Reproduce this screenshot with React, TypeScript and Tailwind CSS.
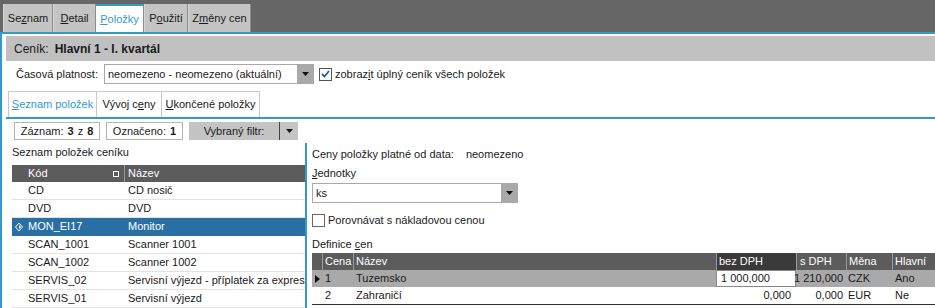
import React from "react";

const U = ({ children }: { children: React.ReactNode }) => (
  <span className="underline underline-offset-[1px]">{children}</span>
);

const Caret = () => (
  <svg width="7" height="4" viewBox="0 0 7 4">
    <path d="M0 0 L7 0 L3.5 4 Z" fill="#111" />
  </svg>
);

const topTabs = [
  { w: "w-[50px]", label: <>Se<U>z</U>nam</> },
  { w: "w-[43px]", label: <><U>D</U>etail</> },
  { w: "w-[48px]", label: <><U>P</U>oložky</>, active: true },
  { w: "w-[44px]", label: <>P<U>o</U>užití</> },
  { w: "w-[63px]", label: <>Z<U>m</U>ěny cen</> },
];

const items = [
  ["CD", "CD nosič"],
  ["DVD", "DVD"],
  ["MON_EI17", "Monitor"],
  ["SCAN_1001", "Scanner 1001"],
  ["SCAN_1002", "Scanner 1002"],
  ["SERVIS_02", "Servisní výjezd - příplatek za expres"],
  ["SERVIS_01", "Servisní výjezd"],
];

export default function App() {
  return (
    <div className="h-[308px] w-[935px] overflow-hidden bg-white font-['Liberation_Sans',Arial,sans-serif] text-[11px] leading-none text-[#1a1a1a]">
      {/* top tabs */}
      <div className="flex h-[32px] items-end bg-[#666666] pl-[3px]">
        {topTabs.map((t, i) => (
          <div
            key={i}
            className={`flex h-[28px] items-center justify-center border-r border-[#8c8c8c] ${t.w} ${
              t.active
                ? "border-t-2 border-t-[#3399cc] bg-white text-[#3399cc]"
                : "border-l border-l-[#d6d6d6] bg-[#c4c4c4] text-[#1a1a1a]"
            }`}
          >
            <span>{t.label}</span>
          </div>
        ))}
      </div>
      <div className="h-[2px] bg-[#3399cc]" />

      <div className="h-[274px] border-l-2 border-[#3399cc] pl-[4px] pt-[2px]">
        {/* header band */}
        <div className="flex h-[25px] items-center border-t border-[#d2bcbc] bg-[#c0c0c0] pl-[8px] text-[12px]">
          <span>Ceník:</span>
          <span className="ml-[6px] font-bold">Hlavní 1 - I. kvartál</span>
        </div>

        {/* platnost */}
        <div className="mt-[3px] flex h-[20px] items-center pl-[10px]">
          <span className="w-[88px]">Časová platnost:</span>
          <div className="flex h-[20px] w-[210px] items-stretch border border-[#a8a8a8]">
            <span className="flex flex-1 items-center pl-[3px]">neomezeno - neomezeno (aktuální)</span>
            <span className="flex w-[16px] items-center justify-center bg-[#a9a9a9]">
              <Caret />
            </span>
          </div>
          <span className="ml-[5px] flex h-[13px] w-[13px] items-center justify-center border border-[#555] bg-white">
            <svg width="9" height="8" viewBox="0 0 9 8">
              <path d="M1 4 L3.5 6.5 L8 1" stroke="#1f5fa8" strokeWidth="1.8" fill="none" />
            </svg>
          </span>
          <span className="ml-[3px]">
            zobraz<U>i</U>t úplný ceník všech položek
          </span>
        </div>

        {/* sub tabs */}
        <div className="ml-[2px] mt-[7px] flex h-[26px] items-stretch">
          <div className="flex w-[89px] items-center justify-center border border-b-0 border-[#c8c8c8] text-[#3399cc]">
            <span>
              <U>S</U>eznam položek
            </span>
          </div>
          <div className="flex w-[65px] items-center justify-center border-r border-t border-[#c8c8c8]">
            <span>
              Vývoj c<U>e</U>ny
            </span>
          </div>
          <div className="flex w-[98px] items-center justify-center border-r border-t border-[#c8c8c8]">
            <span>
              <U>U</U>končené položky
            </span>
          </div>
        </div>
        <div className="h-[2px] bg-[#3399cc]" />

        {/* filter bar */}
        <div className="mt-[3px] flex h-[18px] items-stretch pl-[8px]">
          <div className="flex w-[86px] items-center justify-center border border-[#b4b4b4]">
            <span>Záznam:</span>
            <b className="ml-[4px]">3</b>
            <span className="mx-[4px]">z</span>
            <b>8</b>
          </div>
          <div className="ml-[6px] flex w-[77px] items-center justify-center border border-[#b4b4b4]">
            <span>Označeno:</span>
            <b className="ml-[4px]">1</b>
          </div>
          <div className="ml-[6px] flex w-[90px] items-center justify-center bg-[#c4c4c4]">Vybraný filtr:</div>
          <div className="w-px bg-[#444]" />
          <div className="flex w-[18px] items-center justify-center bg-[#c4c4c4]">
            <Caret />
          </div>
        </div>

        {/* panels */}
        <div className="flex">
          <div className="w-[299px] pl-[6px]">
            <div className="flex h-[25px] items-center">Seznam položek ceníku</div>
            <div className="flex h-[17px] items-stretch bg-[#5c5c5c] text-white">
              <div className="flex w-[112px] items-center justify-between pl-[16px] pr-[5px]">
                <span>Kód</span>
                <span className="h-[6px] w-[6px] border border-white" />
              </div>
              <div className="w-px bg-[#9a9a9a]" />
              <div className="flex items-center pl-[3px]">Název</div>
            </div>
            {items.map(([code, name]) => {
              const sel = code === "MON_EI17";
              return (
                <div
                  key={code}
                  className={`flex h-[18px] items-center border-b ${
                    sel ? "border-[#2a6fa3] bg-[#2a6fa3] text-white" : "border-[#e2e2e2]"
                  }`}
                >
                  <div className="flex w-[16px] items-center justify-center">
                    {sel && (
                      <svg width="10" height="10" viewBox="0 0 10 10">
                        <path d="M4 1 L7.5 5 L4 9 L0.5 5 Z" fill="none" stroke="white" strokeWidth="1" />
                        <path d="M4 3 L6 5 L4 7 Z" fill="white" />
                      </svg>
                    )}
                  </div>
                  <span className="w-[100px]">{code}</span>
                  <span className="whitespace-nowrap">{name}</span>
                </div>
              );
            })}
          </div>

          <div className="mt-[3px] flex-1 border-l-2 border-[#3399cc] pl-[5px]">
            <div className="flex h-[22px] items-center">
              <span>Ceny položky platné od data:</span>
              <span className="ml-[12px]">neomezeno</span>
            </div>
            <div className="flex h-[16px] items-center">
              <span>
                <U>J</U>ednotky
              </span>
            </div>
            <div className="mt-[2px] flex h-[20px] w-[206px] items-stretch border border-[#a8a8a8]">
              <span className="flex flex-1 items-center pl-[3px]">ks</span>
              <span className="flex w-[16px] items-center justify-center bg-[#a9a9a9]">
                <Caret />
              </span>
            </div>
            <div className="mt-[10px] flex h-[14px] items-center">
              <span className="h-[13px] w-[13px] border border-[#666]" />
              <span className="ml-[3px]">Porovnávat s nákladovou cenou</span>
            </div>
            <div className="mt-[8px] flex h-[18px] items-center">
              <span>
                Definice <U>c</U>en
              </span>
            </div>

            {/* prices table */}
            <div className="flex h-[17px] items-stretch bg-[#5c5c5c] text-white">
              <div className="w-[10px]" />
              <div className="flex w-[31px] items-center border-l border-[#9a9a9a] pl-[2px]">Cena</div>
              <div className="flex w-[363px] items-center border-l border-[#9a9a9a] pl-[2px]">Název</div>
              <div className="flex w-[80px] items-center border-l border-[#9a9a9a] bg-[#3a3a3a] pl-[2px]">bez DPH</div>
              <div className="flex w-[50px] items-center border-l border-[#9a9a9a] pl-[3px]">s DPH</div>
              <div className="flex w-[46px] items-center border-l border-[#9a9a9a] pl-[2px]">Měna</div>
              <div className="flex flex-1 items-center border-l border-[#9a9a9a] pl-[2px]">Hlavní</div>
            </div>
            <div className="flex h-[17px] items-stretch bg-[#a9a9a9]">
              <div className="flex w-[10px] items-center justify-center">
                <svg width="5" height="8" viewBox="0 0 5 8">
                  <path d="M0 0 L5 4 L0 8 Z" fill="#111" />
                </svg>
              </div>
              <div className="flex w-[31px] items-center pl-[3px]">1</div>
              <div className="flex w-[363px] items-center pl-[3px]">Tuzemsko</div>
              <div className="flex w-[80px] items-center border border-[#888] bg-white pl-[4px]">1 000,000</div>
              <div className="flex w-[50px] items-center justify-end whitespace-nowrap pr-[3px]">1 210,000</div>
              <div className="flex w-[46px] items-center pl-[2px]">CZK</div>
              <div className="flex flex-1 items-center pl-[3px]">Ano</div>
            </div>
            <div className="flex h-[18px] items-stretch border-b border-[#333]">
              <div className="w-[10px]" />
              <div className="flex w-[31px] items-center pl-[3px]">2</div>
              <div className="flex w-[363px] items-center pl-[3px]">Zahraničí</div>
              <div className="flex w-[80px] items-center justify-end pr-[5px]">0,000</div>
              <div className="flex w-[50px] items-center justify-end pr-[3px]">0,000</div>
              <div className="flex w-[46px] items-center pl-[2px]">EUR</div>
              <div className="flex flex-1 items-center pl-[3px]">Ne</div>
            </div>
          </div>
        </div>
      </div>
    </div>
  );
}
